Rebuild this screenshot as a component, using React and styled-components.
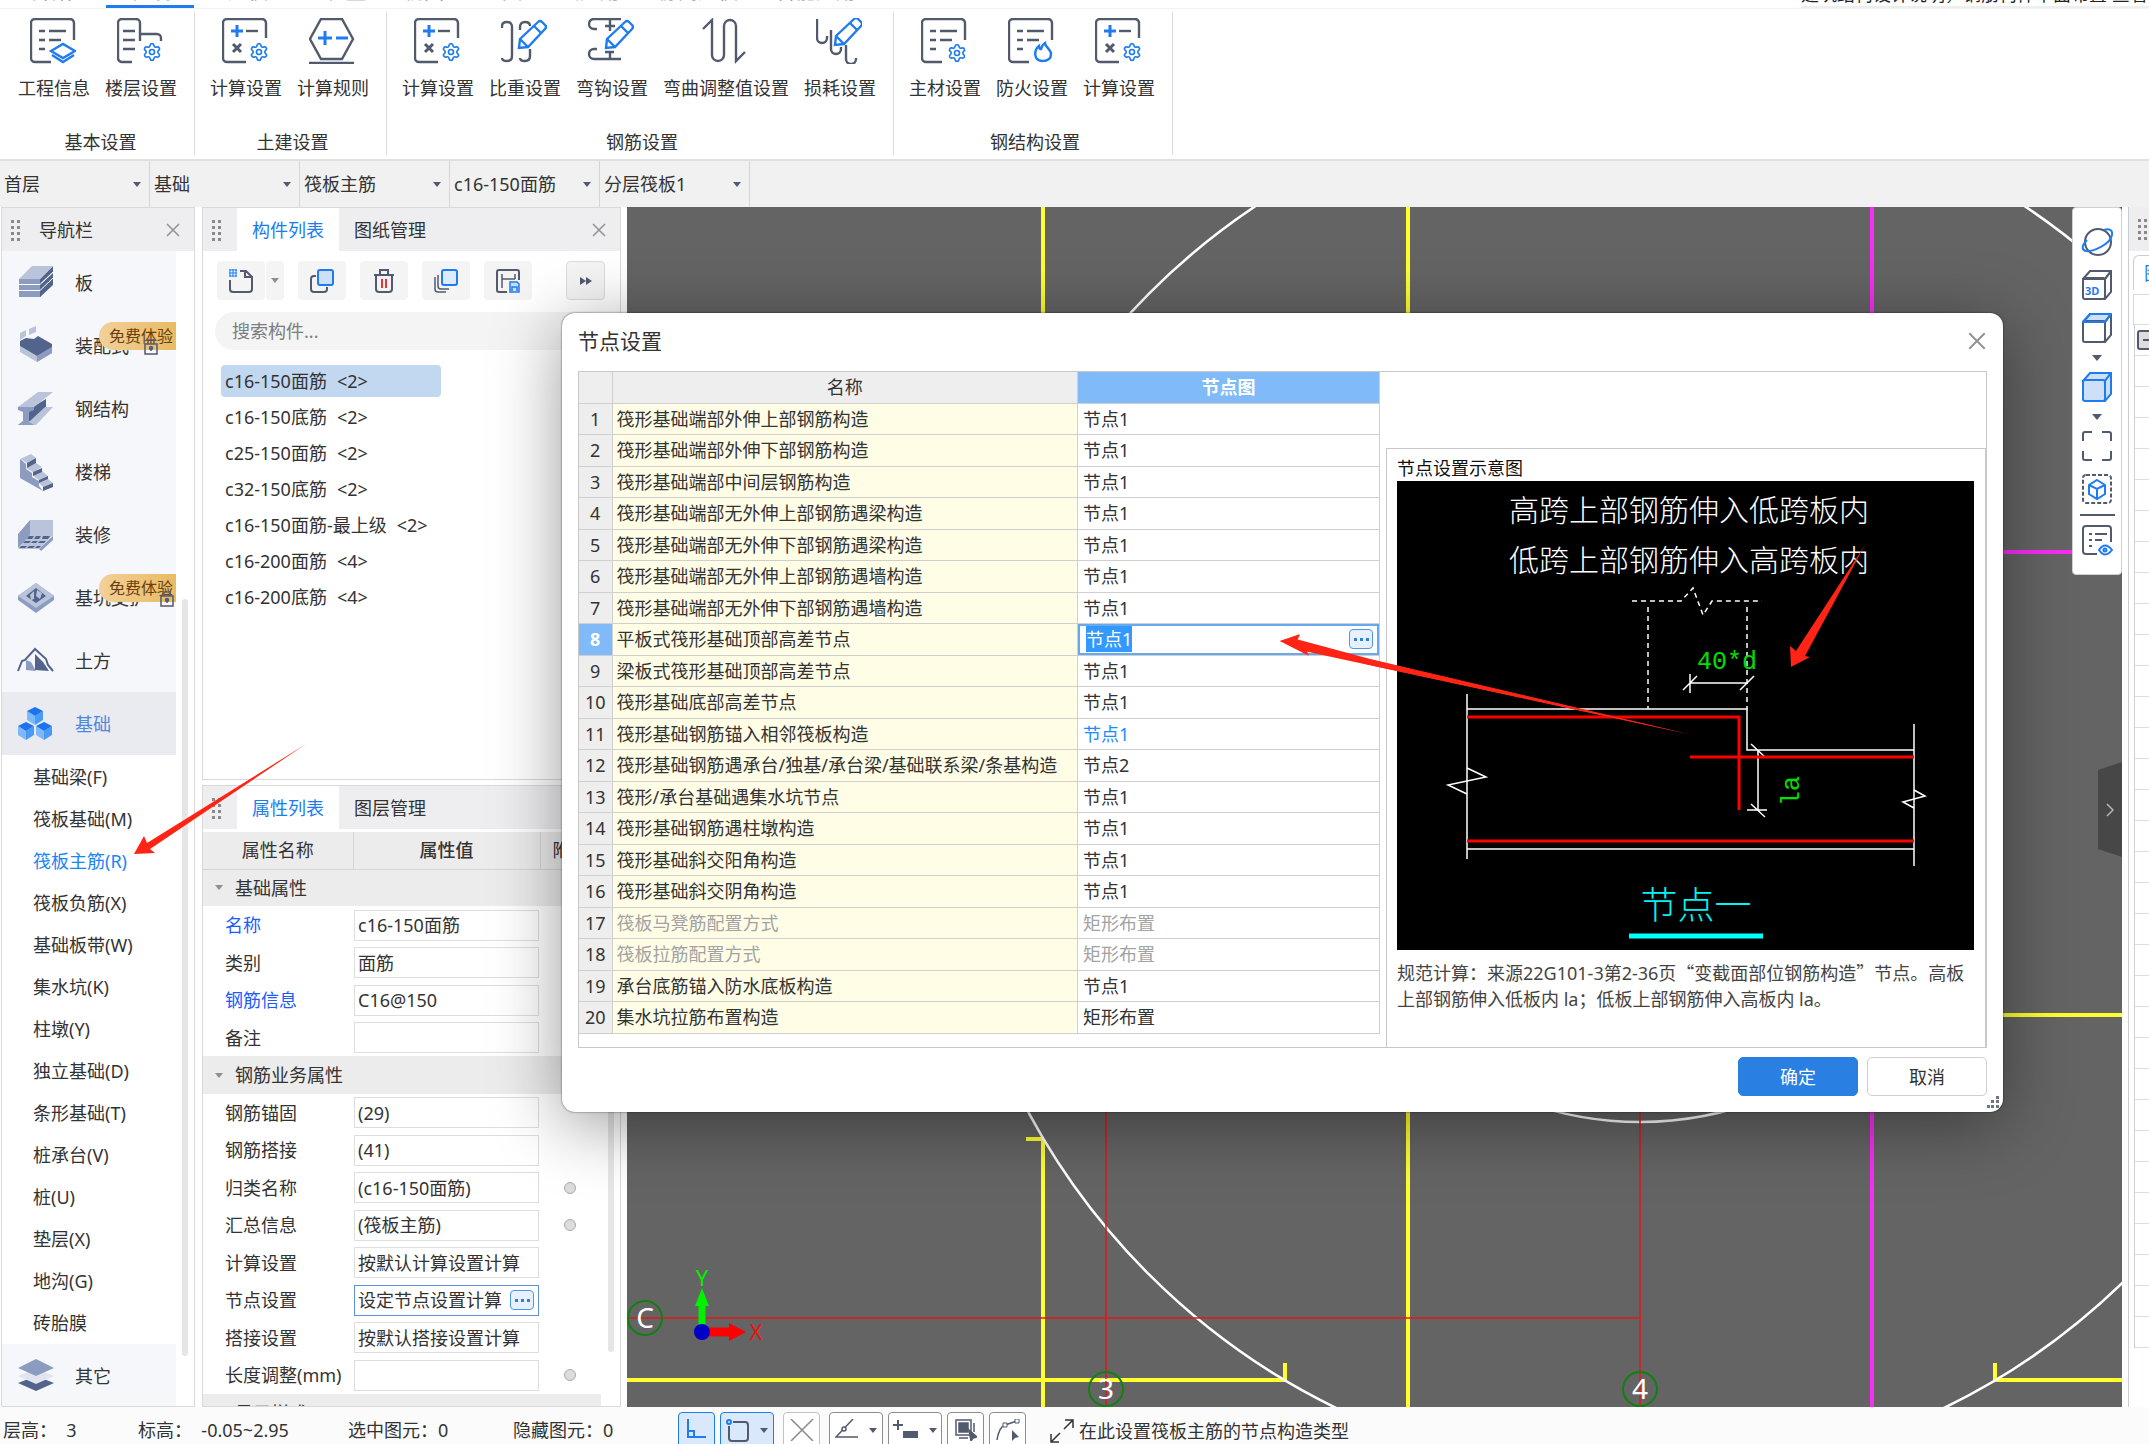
import React, { useEffect, useRef } from 'react';
import styled, { createGlobalStyle, css } from 'styled-components';
import { Settings } from 'lucide-react';

const GREY = '#525a6e';
const BLUE = '#1f7cf0';

const ribbonGroups = [
  {
    title: '基本设置',
    items: [
      { icon: 'info', label: '工程信息' },
      { icon: 'floor', label: '楼层设置' },
    ],
  },
  {
    title: '土建设置',
    items: [
      { icon: 'calc', label: '计算设置' },
      { icon: 'rule', label: '计算规则' },
    ],
  },
  {
    title: '钢筋设置',
    items: [
      { icon: 'calc', label: '计算设置' },
      { icon: 'weight', label: '比重设置' },
      { icon: 'hook', label: '弯钩设置' },
      { icon: 'bend', label: '弯曲调整值设置' },
      { icon: 'loss', label: '损耗设置' },
    ],
  },
  {
    title: '钢结构设置',
    items: [
      { icon: 'material', label: '主材设置' },
      { icon: 'fire', label: '防火设置' },
      { icon: 'calc', label: '计算设置' },
    ],
  },
];

const menuTabs = ['开始', '工程设置', '建模', '工程量', '视图', '工具', '云应用', '协同建模', '智能应用'];

const selectors = [
  ['楼层', '首层'],
  ['构件大类', '基础'],
  ['构件类型', '筏板主筋'],
  ['构件', 'c16-150面筋'],
  ['分层', '分层筏板1'],
];

const navItems = [
  { icon: 'slab', label: '板' },
  { icon: 'prefab', label: '装配式', trial: true, lock: 145 },
  { icon: 'steel', label: '钢结构' },
  { icon: 'stair', label: '楼梯' },
  { icon: 'decor', label: '装修' },
  { icon: 'pit', label: '基坑支护', trial: true, lock: 161 },
  { icon: 'earth', label: '土方' },
  { icon: 'base', label: '基础', active: true },
];

const subItems = [
  '基础梁(F)',
  '筏板基础(M)',
  '筏板主筋(R)',
  '筏板负筋(X)',
  '基础板带(W)',
  '集水坑(K)',
  '柱墩(Y)',
  '独立基础(D)',
  '条形基础(T)',
  '桩承台(V)',
  '桩(U)',
  '垫层(X)',
  '地沟(G)',
  '砖胎膜',
];

const components = [
  ['c16-150面筋', 2],
  ['c16-150底筋', 2],
  ['c25-150面筋', 2],
  ['c32-150底筋', 2],
  ['c16-150面筋-最上级', 2],
  ['c16-200面筋', 4],
  ['c16-200底筋', 4],
];

const properties = [
  { group: '基础属性' },
  { name: '名称', value: 'c16-150面筋', link: true },
  { name: '类别', value: '面筋' },
  { name: '钢筋信息', value: 'C16@150', link: true },
  { name: '备注', value: '' },
  { group: '钢筋业务属性' },
  { name: '钢筋锚固', value: '(29)' },
  { name: '钢筋搭接', value: '(41)' },
  { name: '归类名称', value: '(c16-150面筋)', dot: true },
  { name: '汇总信息', value: '(筏板主筋)', dot: true },
  { name: '计算设置', value: '按默认计算设置计算' },
  { name: '节点设置', value: '设定节点设置计算', active: true },
  { name: '搭接设置', value: '按默认搭接设置计算' },
  { name: '长度调整(mm)', value: '', dot: true },
  { group: '显示样式' },
];

const nodeRows = [
  ['筏形基础端部外伸上部钢筋构造', '节点1'],
  ['筏形基础端部外伸下部钢筋构造', '节点1'],
  ['筏形基础端部中间层钢筋构造', '节点1'],
  ['筏形基础端部无外伸上部钢筋遇梁构造', '节点1'],
  ['筏形基础端部无外伸下部钢筋遇梁构造', '节点1'],
  ['筏形基础端部无外伸上部钢筋遇墙构造', '节点1'],
  ['筏形基础端部无外伸下部钢筋遇墙构造', '节点1'],
  ['平板式筏形基础顶部高差节点', '节点1', 'editing'],
  ['梁板式筏形基础顶部高差节点', '节点1'],
  ['筏形基础底部高差节点', '节点1'],
  ['筏形基础钢筋锚入相邻筏板构造', '节点1', 'changed'],
  ['筏形基础钢筋遇承台/独基/承台梁/基础联系梁/条基构造', '节点2'],
  ['筏形/承台基础遇集水坑节点', '节点1'],
  ['筏形基础钢筋遇柱墩构造', '节点1'],
  ['筏形基础斜交阳角构造', '节点1'],
  ['筏形基础斜交阴角构造', '节点1'],
  ['筏板马凳筋配置方式', '矩形布置', 'disabled'],
  ['筏板拉筋配置方式', '矩形布置', 'disabled'],
  ['承台底筋锚入防水底板构造', '节点1'],
  ['集水坑拉筋布置构造', '矩形布置'],
];

/* ---------- icons ---------- */

const Gear = ({ x, y }) => (
  <Settings x={x - 10} y={y - 10} size={20} color={BLUE} strokeWidth={2} />
);

const Pencil = ({ dx = 0, dy = 0 }) => (
  <g transform={`translate(${dx} ${dy})`} stroke={BLUE}>
    <path d="M18 30l1-9L37 4q2-2 4 0l3 3q2 2 0 4L27 29z" fill="#fff" />
    <path d="M19 21l8 8M33 8l7 7" />
  </g>
);

const Doc = () => (
  <>
    <path d="M44 22V5a4 4 0 0 0-4-4H5a4 4 0 0 0-4 4v35a4 4 0 0 0 4 4h16" />
    <path d="M9 13h6M19 13h17M9 22h6M19 22h12M9 31h6" />
  </>
);

const ribbonIcons = {
  info: (
    <>
      <Doc />
      <g stroke={BLUE}>
        <path d="M21 33l12-7 12 7-12 7z" />
        <path d="M22 37l11 7 11-7" />
      </g>
    </>
  ),
  floor: (
    <>
      <path d="M15 44H5a4 4 0 0 1-4-4V5a4 4 0 0 1 4-4h14a4 4 0 0 1 4 4v18M23 16h17a4 4 0 0 1 4 4v3" />
      <path d="M6 13h12M6 22h12M6 31h12" />
      <Gear x={35} y={34} />
    </>
  ),
  calc: (
    <>
      <path d="M44 20V5a4 4 0 0 0-4-4H5a4 4 0 0 0-4 4v35a4 4 0 0 0 4 4h19" />
      <path d="M9 13h12M15 7v12" stroke={BLUE} strokeWidth="3" />
      <path d="M24 13h12" />
      <path d="M11 26l8 8M19 26l-8 8" strokeWidth="3" />
      <Gear x={37} y={34} />
    </>
  ),
  rule: (
    <>
      <path d="M12 1h21l11 20-11 20H12L1 21zM0 45h45" />
      <path d="M9 20h14M16 13v14M27 20h12" stroke={BLUE} strokeWidth="3" />
    </>
  ),
  weight: (
    <>
      <path d="M1 10V8q0-4 5-4t5 5v29q0 5-5 5t-5-3M19 12V9q0-5 5-5t5 4M29 31v7q0 5-5 5t-5-3" />
      <Pencil />
    </>
  ),
  hook: (
    <>
      <path d="M33 1H6a5 5 0 0 0 0 10h3M22 1v12M17 8h10M9 31H6a5 5 0 0 0 0 10h27M22 34v7M17 34h9" />
      <Pencil />
    </>
  ),
  bend: <path d="M1 11l9-9v35a6 6 0 0 0 12 0V8a6 6 0 0 1 12 0v35l9-9" />,
  loss: (
    <>
      <path d="M1 1v19a5 5 0 0 0 10 0v-2M15 12v19a5 5 0 0 0 10 0v-2M30 27v14a5 5 0 0 0 10 0v-1" />
      <Pencil dx={1} dy={-3} />
    </>
  ),
  material: (
    <>
      <Doc />
      <Gear x={36} y={35} />
    </>
  ),
  fire: (
    <>
      <Doc />
      <path d="M34 43c-9-1-8-11-3-15 0 2 1 3 2 3 1-3 2-5 4-6 0 4 6 6 6 11s-4 7-9 7z" stroke={BLUE} />
    </>
  ),
};

const LIGHT = '#b9c3da';
const MID = '#8c9bc0';
const DARK = '#52638c';

const navIcons = {
  slab: (
    <>
      <path d="M1 31l13-14h21L22 31z" fill={DARK} />
      <path d="M1 25h21v6H1zM1 19h21v5H1zM1 13h21v5H1z" fill={MID} />
      <path d="M22 13L35 0v6L22 18zM22 19L35 7v6L22 24zM22 25l13-12v6L22 31z" fill={DARK} />
      <path d="M1 13L14 0h21L22 13z" fill={LIGHT} />
      <path d="M1 18.500h21L35 6M1 24.500h21L35 12" stroke="#fff" fill="none" />
    </>
  ),
  prefab: (
    <>
      <path d="M2 17l17 10 15-9v6l-15 9L2 23z" fill={LIGHT} />
      <path d="M19 27l15-9v6l-15 9z" fill={MID} />
      <path d="M2 17v-5l6-3 8 1 4-3 14 8v3l-15 9z" fill={DARK} />
      <path d="M2 4l6-3v6l-6 4zM11 0l7-3v6l-7 3z" fill={LIGHT} />
    </>
  ),
  steel: (
    <>
      <path d="M8 19l20-12v9L14 28l-6 4z" fill={DARK} />
      <path d="M0 15L20 0h15L16 15zM0 33l5-4h7L27 15h8L18 33z" fill={LIGHT} />
      <path d="M0 15h16v3l-5 2v10l5 3H0l5-4V20l-5-2z" fill={MID} />
    </>
  ),
  stair: (
    <>
      <path d="M2 4l6 5v5l6 4v4l7 4v5l4 5L2 23z" fill={MID} />
      <path d="M2 4l11-5 5 4-9 5zM8 13l10-5 6 4-9 5zM14 20l10-4 6 5-9 4zM21 28l9-4 5 4-10 4z" fill={LIGHT} />
      <path d="M9 8l9-5v5l-9 5zM15 17l9-4v4l-9 4zM21 25l9-4v3l-9 4zM25 32l10-4v4l-10 4z" fill={DARK} />
    </>
  ),
  decor: (
    <>
      <path d="M0 16L12 2v16L0 30z" fill={MID} />
      <path d="M12 2h23v16H12z" fill={LIGHT} />
      <path d="M0 31l12-14h23L21 31z" fill={LIGHT} />
      <path d="M21 31l14-13v4L23 33z" fill={MID} />
      <path d="M11 18h5l-2 3H9zM18 18h5l-2 3h-5zM25 18h7l-2 3h-6zM7 23h6l-2 2H5zM15 23h5l-2 2h-5zM22 23h6l-2 2h-6zM3 28h6l-2 2H1zM11 28h6l-2 2H9zM19 28h4l-2 2h-4z" fill={DARK} />
    </>
  ),
  pit: (
    <>
      <path d="M0 15L18 2l18 13v4L18 32 0 19z" fill={MID} />
      <path d="M0 15L18 2l18 13-18 12z" fill={LIGHT} />
      <path d="M8 15l10-8 10 8-10 7z" fill={DARK} />
      <path d="M12 14l4-4v8l-3 1zM19 9l5 3-2 6-4-3z" fill={LIGHT} />
    </>
  ),
  earth: (
    <>
      <path d="M0 27l4-10 3-1L17 5l11 10 2 6 5 6" fill="none" stroke={DARK} strokeWidth="2" />
      <path d="M8 26V16l5 2 5 9z" fill={MID} />
      <path d="M17 26V10l8 8 6 9z" fill={DARK} />
    </>
  ),
  base: (
    <>
      {[
        [9, 0],
        [0, 15],
        [18, 15],
      ].map(([x, y]) => (
        <g key={`${x}-${y}`} transform={`translate(${x} ${y})`}>
          <path d="M0 4l8 5v9l-8-5z" fill="#7db8fb" />
          <path d="M16 4l-8 5v9l8-5z" fill="#4a9bf8" />
          <path d="M0 4l8-4 8 4-8 5z" fill="#1c73ee" />
        </g>
      ))}
    </>
  ),
  other: (
    <>
      <path d="M0 24l18-7 18 7-18 8z" fill={DARK} />
      <path d="M0 17l18-7 18 7-18 8z" fill="#e0e5f0" />
      <path d="M0 9l18-9 18 9-18 8z" fill={MID} />
    </>
  ),
};

const GripDots = ({ rows = 4 }) => (
  <svg width="12" height="24" viewBox="0 0 12 24" fill="#8a8a8a" aria-hidden="true">
    {Array.from({ length: rows }, (_, i) => (
      <g key={i}>
        <rect x="1" y={2 + i * 6} width="3" height="3" />
        <rect x="7" y={2 + i * 6} width="3" height="3" />
      </g>
    ))}
  </svg>
);

const Cross = ({ size = 14 }) => (
  <svg width={size} height={size} viewBox="0 0 14 14" stroke="#929292" strokeWidth="1.500" aria-hidden="true">
    <path d="M1 1l12 12M13 1L1 13" />
  </svg>
);

const Cube = ({ blueTop, filled, children }) => (
  <g fill="none" stroke={filled ? BLUE : GREY} strokeWidth="2">
    <path d="M1 9l7-8h21l-6 8z" fill={filled || blueTop ? '#cde0f8' : 'none'} stroke={filled || blueTop ? BLUE : GREY} />
    <path d="M23 9l6-8v21l-6 7z" fill={filled ? '#cde0f8' : 'none'} />
    <rect x="1" y="8" width="22" height="21" rx="2" fill={filled ? '#cde0f8' : 'none'} />
    {blueTop && <path d="M1 9l7-8h21l-6 8z" stroke={BLUE} />}
    {children}
  </g>
);

/* ---------- page ---------- */

function Ribbon() {
  return (
    <RibbonBar>
      {ribbonGroups.map((group) => (
        <RibbonGroup key={group.title}>
          <RibbonItems>
            {group.items.map((item) => (
              <RibbonButton key={item.label} type="button">
                <svg width="46" height="46" viewBox="0 0 46 46" fill="none" stroke={GREY} strokeWidth="2.400">
                  {ribbonIcons[item.icon]}
                </svg>
                {item.label}
              </RibbonButton>
            ))}
          </RibbonItems>
          <RibbonTitle>{group.title}</RibbonTitle>
        </RibbonGroup>
      ))}
    </RibbonBar>
  );
}

function NavPanel() {
  return (
    <Nav>
      <PanelHeader>
        <Grip>
          <GripDots />
        </Grip>
        <NavTitle>导航栏</NavTitle>
        <CloseButton type="button" aria-label="关闭导航栏">
          <Cross />
        </CloseButton>
      </PanelHeader>
      <NavBody>
        {navItems.map((item) => (
          <NavItem key={item.label} href="#" $active={item.active}>
            <svg width="36" height="36" viewBox="0 0 36 34" aria-hidden="true" overflow="visible">
              {navIcons[item.icon]}
            </svg>
            {item.label}
            {item.trial && <TrialBadge>免费体验</TrialBadge>}
            {item.lock && (
              <LockIcon $left={item.lock} viewBox="0 0 14 17" fill="none" stroke={GREY} strokeWidth="1.500">
                <path d="M1 6h12v10H1zM4 6V2h6v4M7 9v4" />
                <circle cx="7" cy="10" r="1.500" />
              </LockIcon>
            )}
          </NavItem>
        ))}
        <SubList>
          {subItems.map((label) => (
            <li key={label}>
              <SubItem href="#" $active={label === '筏板主筋(R)'}>
                {label}
              </SubItem>
            </li>
          ))}
        </SubList>
        <NavItem href="#">
          <svg width="36" height="36" viewBox="0 0 36 34" aria-hidden="true">
            {navIcons.other}
          </svg>
          其它
        </NavItem>
      </NavBody>
      <NavScroll />
    </Nav>
  );
}

function ComponentPanel() {
  return (
    <Panel>
      <PanelHeader>
        <Grip>
          <GripDots />
        </Grip>
        <PanelTab type="button" $active>
          构件列表
        </PanelTab>
        <PanelTab type="button">图纸管理</PanelTab>
        <CloseButton type="button" aria-label="关闭构件列表">
          <Cross />
        </CloseButton>
      </PanelHeader>
      <ToolRow>
        <SplitButton>
          <ToolButton type="button" aria-label="新建">
            <svg width="24" height="24" viewBox="0 0 24 24" fill="none" stroke={GREY} strokeWidth="2">
              <path d="M11 2h6l6 6v12a3 3 0 0 1-3 3H4a3 3 0 0 1-3-3V11M16 2v6h6" />
              <path d="M0 1h8M0 4h8M0 7h8M1 0v8M4 0v8M7 0v8" stroke={BLUE} strokeWidth="1" />
            </svg>
          </ToolButton>
          <SplitArrow type="button" aria-label="新建选项">
            <Caret $size={4} />
          </SplitArrow>
        </SplitButton>
        <ToolButton type="button" aria-label="复制">
          <svg width="24" height="24" viewBox="0 0 24 24" fill="none" stroke={GREY} strokeWidth="2">
            <path d="M6 7H4a3 3 0 0 0-3 3v10a3 3 0 0 0 3 3h10a3 3 0 0 0 3-3v-2" />
            <rect x="8" y="1" width="15" height="15" rx="2" fill="#cde0f8" stroke={BLUE} />
          </svg>
        </ToolButton>
        <ToolButton type="button" aria-label="删除">
          <svg width="22" height="24" viewBox="0 0 22 24" fill="none" stroke={GREY} strokeWidth="2">
            <path d="M1 6h20M7 5V1h8v4M3 6v14a3 3 0 0 0 3 3h10a3 3 0 0 0 3-3V6" />
            <path d="M9 10v9M13 10v9" stroke="#e8343a" />
          </svg>
        </ToolButton>
        <ToolButton type="button" aria-label="层间复制">
          <svg width="24" height="24" viewBox="0 0 24 24" fill="none" stroke={GREY} strokeWidth="2">
            <path d="M1 8v12a3 3 0 0 0 3 3h8M4 6v11a3 3 0 0 0 3 3h8" strokeWidth="1.500" />
            <rect x="8" y="1" width="15" height="15" rx="2" fill="#deebfb" stroke={BLUE} />
          </svg>
        </ToolButton>
        <ToolButton type="button" aria-label="存档">
          <svg width="24" height="24" viewBox="0 0 24 24" fill="none" stroke={GREY} strokeWidth="2">
            <path d="M23 11V3a2 2 0 0 0-2-2H3a2 2 0 0 0-2 2v18a2 2 0 0 0 2 2h8" />
            <path d="M6 5v14M19 5v5M6 10h13" strokeWidth="1.500" />
            <path d="M14 13h7l2 2v8h-9zM16 22v-4h5v4" stroke={BLUE} strokeWidth="1.500" fill="#cde0f8" />
          </svg>
        </ToolButton>
        <MoreButton type="button" aria-label="更多">
          <svg width="12" height="8" viewBox="0 0 12 8" fill={GREY}>
            <path d="M0 0l6 4-6 4zM6 0l6 4-6 4z" />
          </svg>
        </MoreButton>
      </ToolRow>
      <SearchInput type="search" aria-label="搜索构件" placeholder="搜索构件..." />
      <ComponentList>
        {components.map(([name, count], index) => (
          <ComponentItem key={name} $active={index === 0}>
            <span>{name}</span>
            <span>{`< ${count} >`.replace(/ /g, '')}</span>
          </ComponentItem>
        ))}
      </ComponentList>
    </Panel>
  );
}

function PropertyPanel() {
  return (
    <Panel>
      <PanelHeader>
        <Grip>
          <GripDots />
        </Grip>
        <PanelTab type="button" $active>
          属性列表
        </PanelTab>
        <PanelTab type="button">图层管理</PanelTab>
      </PanelHeader>
      <PropertyTable>
        <colgroup>
          <col className="name" />
          <col className="value" />
          <col />
        </colgroup>
        <thead>
          <tr>
            <th>属性名称</th>
            <th className="strong">属性值</th>
            <th className="extra">附加</th>
          </tr>
        </thead>
        <tbody>
          {properties.map((row) =>
            row.group ? (
              <tr key={row.group}>
                <td colSpan={3} className="group">
                  <GroupLabel>
                    <Caret $size={4} />
                    {row.group}
                  </GroupLabel>
                </td>
              </tr>
            ) : (
              <tr key={row.name}>
                <PropertyName $link={row.link}>
                  <label htmlFor={`prop-${row.name}`}>{row.name}</label>
                </PropertyName>
                <td>
                  <ValueBox $active={row.active}>
                    <input id={`prop-${row.name}`} defaultValue={row.value} />
                    {row.active && (
                      <DotsButton type="button" aria-label="打开节点设置">
                        <i />
                        <i />
                        <i />
                      </DotsButton>
                    )}
                  </ValueBox>
                </td>
                <td className="dot">
                  {row.dot && <ExtraCheck type="checkbox" aria-label={`附加${row.name}`} />}
                </td>
              </tr>
            )
          )}
        </tbody>
      </PropertyTable>
      <PropertyScroll />
    </Panel>
  );
}

function ModelView() {
  return (
    <Canvas>
      <svg width="100%" height="100%" viewBox="627 207 1495 1200" preserveAspectRatio="xMinYMin slice" fill="none">
        <g stroke="#ffff2e" strokeWidth="4">
          <path d="M1043 207v150M1026 1139h18M1043 1139v268M1408 207v1200" />
          <path d="M627 1380h660M1285 1363v17M1995 1363v17M1994 1380h130M1980 1015h144" />
        </g>
        <path d="M1872 207v1200M1980 552h144" stroke="#fb2cf8" strokeWidth="4" />
        <g stroke="#fff" strokeWidth="2.500">
          <circle cx="1640" cy="784" r="694" />
          <circle cx="1640" cy="784" r="338" />
        </g>
        <path d="M627 1318h1013M1106 1100v307M1640 1100v307" stroke="#e01818" strokeWidth="1.500" />
        <g stroke="#118011" strokeWidth="2">
          <circle cx="645" cy="1318" r="17" />
          <circle cx="1106" cy="1389" r="17" />
          <circle cx="1640" cy="1389" r="17" />
        </g>
        <g fill="#fff" fontSize="28" textAnchor="middle">
          <text x="645" y="1328">C</text>
          <text x="1106" y="1399">3</text>
          <text x="1640" y="1399">4</text>
        </g>
        <path d="M702 1332v-30" stroke="#00f000" strokeWidth="7" />
        <path d="M702 1288l7 18h-14z" fill="#00f000" />
        <path d="M702 1332h28" stroke="#f00" strokeWidth="9" />
        <path d="M729 1323l17 9-17 9z" fill="#f00" />
        <circle cx="702" cy="1332" r="8" fill="#0000c8" />
        <g fontSize="22" textAnchor="middle">
          <text x="702" y="1286" fill="#00f000">
            Y
          </text>
          <text x="756" y="1340" fill="#f01010">
            X
          </text>
        </g>
      </svg>
      <ViewTools>
        <ViewButton type="button" aria-label="动态观察">
          <svg width="32" height="30" viewBox="0 0 32 30" fill="none" stroke={GREY} strokeWidth="2">
            <circle cx="17" cy="15" r="13" />
            <path d="M6 13c-5 5-6 10-1 11 6 1 24-6 26-16 1-5-3-7-8-5" stroke={BLUE} />
          </svg>
        </ViewButton>
        <ViewButton type="button" aria-label="三维">
          <svg width="30" height="30" viewBox="0 0 30 30">
            <Cube />
            <text x="3" y="25" fontSize="11" fontWeight="700" fill={BLUE}>
              3D
            </text>
          </svg>
        </ViewButton>
        <ViewButton type="button" aria-label="俯视">
          <svg width="30" height="30" viewBox="0 0 30 30">
            <Cube blueTop />
          </svg>
        </ViewButton>
        <Caret $size={5} $dark />
        <ViewButton type="button" aria-label="实体显示">
          <svg width="30" height="30" viewBox="0 0 30 30">
            <Cube filled />
          </svg>
        </ViewButton>
        <Caret $size={5} $dark />
        <ViewButton type="button" aria-label="全屏">
          <svg width="30" height="30" viewBox="0 0 30 30" fill="none" stroke={GREY} strokeWidth="2">
            <path d="M1 10V3q0-2 2-2h7M20 1h7q2 0 2 2v7M29 20v7q0 2-2 2h-7M10 29H3q-2 0-2-2v-7" />
          </svg>
        </ViewButton>
        <ViewButton type="button" aria-label="局部三维">
          <svg width="30" height="30" viewBox="0 0 30 30" fill="none" strokeWidth="2">
            <rect x="1" y="1" width="28" height="28" rx="3" stroke={GREY} strokeDasharray="4 2" />
            <path d="M15 6l8 5v9l-8 5-8-5v-9zM7 11l8 4 8-4M15 15v10" stroke={BLUE} />
          </svg>
        </ViewButton>
        <ToolDivider />
        <ViewButton type="button" aria-label="显示设置">
          <svg width="31" height="31" viewBox="0 0 31 31" fill="none" stroke={GREY} strokeWidth="2">
            <path d="M29 17V4q0-3-3-3H4Q1 1 1 4v22q0 3 3 3h11M7 9h3M13 9h12M7 15h3M13 15h7M7 21h3" />
            <path d="M17 25q6-9 13 0-7 9-13 0z" stroke={BLUE} />
            <circle cx="23" cy="25" r="1.500" stroke={BLUE} />
          </svg>
        </ViewButton>
      </ViewTools>
      <SideHandle type="button" aria-label="展开">
        <svg width="8" height="14" viewBox="0 0 8 14" fill="none" stroke="#b5b5b5" strokeWidth="1.500">
          <path d="M1 1l6 6-6 6" />
        </svg>
      </SideHandle>
    </Canvas>
  );
}

function DrawingPanel() {
  return (
    <EdgePanel>
      <EdgeHeader>
        <GripDots />
      </EdgeHeader>
      <EdgeTab>图纸管理</EdgeTab>
      <EdgeBlank />
      <EdgeGrid>
        <EdgeRow>
          <Minus />
        </EdgeRow>
        {Array.from({ length: 32 }, (_, i) => (
          <EdgeRow key={i} />
        ))}
      </EdgeGrid>
    </EdgePanel>
  );
}

function NodeDiagram() {
  return (
    <Diagram viewBox="0 0 577 469" fill="none" stroke="#fff" strokeWidth="1.500">
      <g stroke="none" fill="#fff" fontSize="30" fontWeight="300" textAnchor="middle">
        <text x="292" y="40">
          高跨上部钢筋伸入低跨板内
        </text>
        <text x="292" y="90">
          低跨上部钢筋伸入高跨板内
        </text>
      </g>
      <g strokeDasharray="5 4">
        <path d="M235 120h49l12-13 10 27 9-14h50M251 126v102M350 126v102" />
      </g>
      <path d="M293 202h57M293 193v19M286 209l14-14M343 209l14-14" />
      <path d="M70 213v165M70 228h280v41h167M517 243v142M70 368h447" />
      <path d="M70 287l19 9-38 8 19 9M517 309l11 6-22 6 11 6" />
      <path d="M361 269v60M350 329h20M354 263l14 13M354 323l14 13" />
      <g stroke="#f00" strokeWidth="3">
        <path d="M70 236h272v93M293 276h224M70 360h447" />
      </g>
      <g stroke="none" fill="#00e000" fontSize="25" fontFamily="Liberation Mono, monospace">
        <text x="300" y="188">
          40*d
        </text>
        <text transform="translate(402 325) rotate(-90)">la</text>
      </g>
      <text x="299" y="438" stroke="none" fill="#00f5f5" fontSize="37" fontWeight="300" textAnchor="middle">
        节点一
      </text>
      <path d="M232 455h134" stroke="#0ff" strokeWidth="5" />
    </Diagram>
  );
}

function NodeDialog() {
  const editor = useRef(null);

  useEffect(() => {
    editor.current.focus();
    editor.current.select();
  }, []);

  return (
    <Dialog role="dialog" aria-label="节点设置">
      <DialogHeader>
        <h2>节点设置</h2>
        <DialogClose type="button" aria-label="关闭">
          <Cross size={18} />
        </DialogClose>
      </DialogHeader>
      <DialogBody>
        <NodeTable>
          <colgroup>
            <col className="index" />
            <col />
            <col className="node" />
          </colgroup>
          <thead>
            <tr>
              <th aria-label="序号" />
              <th>名称</th>
              <th className="current">节点图</th>
            </tr>
          </thead>
          <tbody>
            {nodeRows.map(([name, node, state], index) => (
              <tr key={name} className={state}>
                <th scope="row">{index + 1}</th>
                <td className="name">{name}</td>
                <td className="value">
                  {state === 'editing' ? (
                    <NodeEditor>
                      <input ref={editor} aria-label={name} defaultValue={node} />
                      <DotsButton type="button" aria-label="选择节点图">
                        <i />
                        <i />
                        <i />
                      </DotsButton>
                    </NodeEditor>
                  ) : (
                    node
                  )}
                </td>
              </tr>
            ))}
          </tbody>
        </NodeTable>
        <Preview>
          <h3>节点设置示意图</h3>
          <NodeDiagram />
          <p>
            规范计算：来源22G101-3第2-36页<Quote>“</Quote>变截面部位钢筋构造<Quote>”</Quote>节点。高板上部钢筋伸入低板内
            la；低板上部钢筋伸入高板内 la。
          </p>
        </Preview>
      </DialogBody>
      <DialogFooter>
        <DialogButton type="button" $primary>
          确定
        </DialogButton>
        <DialogButton type="button">取消</DialogButton>
      </DialogFooter>
      <ResizeGrip viewBox="0 0 12 12" fill="#6d7482">
        <path d="M9 0h3v3H9zM9 4h3v3H9zM9 9h3v3H9zM4 4h3v3H4zM4 9h3v3H4zM0 9h3v3H0z" />
      </ResizeGrip>
    </Dialog>
  );
}

function StatusBar() {
  return (
    <Status>
      <StatusText $width={135}>层高：&nbsp; 3</StatusText>
      <StatusText $width={210}>标高：&nbsp; -0.05~2.95</StatusText>
      <StatusText $width={165}>选中图元：0</StatusText>
      <StatusText $width={165}>隐藏图元：0</StatusText>
      <StatusTools>
        <StatusButton type="button" aria-label="正交" $on>
          <svg width="20" height="20" viewBox="0 0 20 20" fill="none" stroke={BLUE} strokeWidth="2">
            <path d="M1 0v18h18M1 12h6v6" />
          </svg>
        </StatusButton>
        <StatusButton type="button" aria-label="对象捕捉" $on $wide>
          <svg width="24" height="24" viewBox="0 0 24 24" fill="none" stroke={GREY} strokeWidth="2">
            <path d="M7 3h12q3 0 3 3v13q0 3-3 3H6q-3 0-3-3V7" />
            <circle cx="3" cy="3" r="2" stroke={BLUE} />
          </svg>
          <Caret $size={4} $dark />
        </StatusButton>
        <StatusButton type="button" aria-label="交点" $faint>
          <svg width="24" height="22" viewBox="0 0 24 22" fill="none" stroke="#8b8b8b" strokeWidth="1.500">
            <path d="M1 0l22 22M23 0L1 22" />
          </svg>
        </StatusButton>
        <StatusButton type="button" aria-label="角度" $wide>
          <svg width="24" height="20" viewBox="0 0 24 20" fill="none" stroke={GREY} strokeWidth="1.500">
            <path d="M18 0L1 18h22" />
            <circle cx="9" cy="10" r="2" fill="#fff" />
          </svg>
          <Caret $size={4} $dark />
        </StatusButton>
        <StatusButton type="button" aria-label="偏移" $wide>
          <svg width="26" height="20" viewBox="0 0 26 20" fill="none" stroke={GREY} strokeWidth="2">
            <path d="M0 6h10M5 1v10" />
            <path d="M10 12h15v7H10z" fill={GREY} stroke="none" />
          </svg>
          <Caret $size={4} $dark />
        </StatusButton>
        <StatusButton type="button" aria-label="选择">
          <svg width="22" height="22" viewBox="0 0 22 22" fill="none" stroke={GREY} strokeWidth="1.500">
            <path d="M1 1h15v15H1zM19 4v9M4 19h9" />
            <path d="M4 4h9v9H4z" fill={GREY} />
            <path d="M14 11l8 7-4 1-2 3z" fill={GREY} />
          </svg>
        </StatusButton>
        <StatusButton type="button" aria-label="折线">
          <svg width="24" height="22" viewBox="0 0 24 22" fill="none" stroke={GREY} strokeWidth="1.500">
            <path d="M1 21Q3 8 9 6l12-4" />
            <path d="M7 4h4v4H7zM19 0h4v4h-4z" fill="#fff" strokeWidth="1" />
            <path d="M16 11l7 7-4 1-3 3z" fill={GREY} stroke="none" />
          </svg>
        </StatusButton>
      </StatusTools>
      <StatusHint>
        <svg width="24" height="24" viewBox="0 0 24 24" fill="none" stroke="#333" strokeWidth="1.500">
          <path d="M14 10l9-9M15 1h8v8M10 14l-9 9M1 15v8h8" />
        </svg>
        在此设置筏板主筋的节点构造类型
      </StatusHint>
    </Status>
  );
}

function App() {
  return (
    <Page>
      <GlobalStyle />
      <MenuRow>
        <MenuTabs>
          {menuTabs.map((tab) => (
            <MenuTab key={tab} href="#" $active={tab === '工程设置'}>
              {tab}
            </MenuTab>
          ))}
        </MenuTabs>
        <MenuNotice>建筑结构设计说明，钢筋构件平面布置 查看图纸</MenuNotice>
      </MenuRow>
      <Ribbon />
      <SelectorBar>
        {selectors.map(([label, value]) => (
          <SelectCell key={label}>
            <select aria-label={label} defaultValue={value}>
              <option>{value}</option>
            </select>
            <Caret $size={4} $dark />
          </SelectCell>
        ))}
      </SelectorBar>
      <Workspace>
        <NavPanel />
        <PanelColumn>
          <ComponentPanel />
          <PropertyPanel />
        </PanelColumn>
        <ModelView />
        <DrawingPanel />
      </Workspace>
      <StatusBar />
      <NodeDialog />
      <Annotations viewBox="0 0 2149 1444" preserveAspectRatio="xMinYMin meet" fill="#ff2415">
        <path d="M134 854l10-18 3 7L306 744 150 849l5 4z" />
        <path d="M1280 641l20-6-4 7 392 92-384-83 5 5z" />
        <path d="M1280 641l29 14-4-7 65 17 318 69-318-75-74-20 4-5z" />
        <path d="M1791 667l-1-21 6 5 69-106-60 111 5 1z" />
      </Annotations>
    </Page>
  );
}

/* ---------- styles ---------- */

const GlobalStyle = createGlobalStyle`
  * {
    box-sizing: border-box;
  }

  body {
    margin: 0;
    overflow: hidden;
    color: #333;
    font-family: 'Noto Sans', 'Noto Sans CJK SC', sans-serif;
    font-size: 18px;
    line-height: 26px;
  }

  button, input, select {
    margin: 0;
    padding: 0;
    border: 0;
    background: none;
    color: inherit;
    font: inherit;
  }

  a {
    color: inherit;
    text-decoration: none;
  }

  ul, h2, h3, p {
    margin: 0;
    padding: 0;
    list-style: none;
    font-size: 18px;
    font-weight: 400;
  }
`;

const Page = styled.div`
  position: relative;
  display: flex;
  flex-direction: column;
  height: 100vh;
  overflow: hidden;
  background: #fff;
`;

const Caret = styled.span`
  flex: none;
  width: 0;
  border: ${(props) => props.$size}px solid transparent;
  border-top: ${(props) => props.$size + 1}px solid ${(props) => (props.$dark ? GREY : '#8f8f8f')};
  border-bottom: 0;
`;

const MenuRow = styled.header`
  display: flex;
  flex: none;
  justify-content: space-between;
  align-items: flex-end;
  height: 9px;
  padding-left: 28px;
  border-bottom: 1px solid #f2f2f2;
`;

const MenuTabs = styled.nav`
  display: flex;
  gap: 30px;
`;

const MenuTab = styled.a`
  height: 26px;
  padding: 0 4px;
  border-bottom: 3px solid ${(props) => (props.$active ? BLUE : 'transparent')};
  color: ${(props) => (props.$active ? BLUE : '#777')};
  font-size: 20px;
  line-height: 20px;
`;

const MenuNotice = styled.span`
  width: 348px;
  height: 24px;
  overflow: hidden;
  border-bottom: 2px solid #eee;
  color: #222;
  line-height: 20px;
  white-space: nowrap;
`;

const RibbonBar = styled.section`
  display: flex;
  flex: none;
  height: 150px;
  padding: 3px 0 4px 3px;
`;

const RibbonGroup = styled.div`
  display: flex;
  flex-direction: column;
  justify-content: space-between;
  padding: 6px 10px 0 8px;
  border-right: 1px solid #dcdcdc;
`;

const RibbonItems = styled.div`
  display: flex;
  gap: 1px;
`;

const RibbonButton = styled.button`
  display: flex;
  flex-direction: column;
  align-items: center;
  gap: 11px;
  padding: 0 7px;

  svg {
    margin-right: 2px;
  }
`;

const RibbonTitle = styled.div`
  padding-left: 6px;
  text-align: center;
`;

const SelectorBar = styled.div`
  display: flex;
  flex: none;
  height: 48px;
  border-top: 2px solid #dfdfdf;
  background: #f1f1f1;
`;

const SelectCell = styled.div`
  display: flex;
  align-items: center;
  width: 150px;
  padding: 0 8px 0 4px;
  border-right: 1px solid #d6d6d6;

  select {
    flex: 1;
    min-width: 0;
    appearance: none;
  }
`;

const Workspace = styled.main`
  display: flex;
  flex: 1;
  min-height: 0;
`;

const PanelHeader = styled.div`
  display: flex;
  flex: none;
  align-items: stretch;
  height: 43px;
  background: #eeeef0;
`;

const Grip = styled.span`
  display: flex;
  flex: none;
  align-items: center;
  width: 34px;
  padding-left: 8px;
`;

const CloseButton = styled.button`
  display: flex;
  align-items: center;
  margin-left: auto;
  padding-right: 14px;
`;

const Nav = styled.aside`
  position: relative;
  display: flex;
  flex: none;
  flex-direction: column;
  width: 194px;
  margin-left: 1px;
  border: 1px solid #d9d9d9;
  overflow: hidden;
`;

const NavTitle = styled.span`
  align-self: center;
  padding-left: 3px;
`;

const NavBody = styled.div`
  flex: 1;
  width: 174px;
  overflow: hidden;
`;

const NavItem = styled.a`
  position: relative;
  display: flex;
  align-items: center;
  gap: 21px;
  height: 63px;
  padding-left: 16px;
  background: ${(props) => (props.$active ? '#e9ebf0' : '#f5f7fa')};
  color: ${(props) => (props.$active ? '#4f86e0' : '#333')};
  white-space: nowrap;
`;

const TrialBadge = styled.span`
  position: absolute;
  top: 8px;
  right: 0;
  width: 77px;
  padding-left: 10px;
  border-radius: 14px 0 0 14px;
  background: linear-gradient(90deg, #f3d09a, #e8bb62);
  color: #6b3f0c;
  font-size: 16px;
  line-height: 28px;
`;

const LockIcon = styled.svg`
  position: absolute;
  top: 24px;
  left: ${(props) => props.$left - 3}px;
  width: 14px;
  height: 17px;
`;

const SubList = styled.ul`
  padding-top: 1px;
`;

const SubItem = styled.a`
  display: block;
  padding-left: 31px;
  color: ${(props) => (props.$active ? '#1a86f5' : '#333')};
  line-height: 42px;
`;

const NavScroll = styled.div`
  position: absolute;
  right: 6px;
  top: 391px;
  bottom: 50px;
  width: 6px;
  border-radius: 3px;
  background: #e6e6e6;
`;

const PanelColumn = styled.div`
  display: grid;
  flex: none;
  grid-template-rows: 573px minmax(0, 1fr);
  gap: 5px;
  width: 419px;
  margin: 0 6px 0 7px;
`;

const Panel = styled.section`
  position: relative;
  display: flex;
  flex-direction: column;
  min-height: 0;
  border: 1px solid #d9d9d9;
  overflow: hidden;
`;

const PanelTab = styled.button`
  padding: 0 15px;
  background: ${(props) => (props.$active ? '#fff' : 'transparent')};
  color: ${(props) => (props.$active ? '#1a7cf0' : '#333')};
`;

const ToolRow = styled.div`
  display: flex;
  gap: 14px;
  padding: 10px 15px 12px 14px;
`;

const ToolButton = styled.button`
  display: flex;
  align-items: center;
  justify-content: center;
  width: 48px;
  height: 39px;
  border-radius: 4px;
  background: #f4f4f4;
`;

const SplitButton = styled.div`
  display: flex;
  gap: 1px;
`;

const SplitArrow = styled(ToolButton)`
  width: 18px;
`;

const MoreButton = styled(ToolButton)`
  width: 39px;
  margin-left: auto;
  border: 1px solid #dcdcdc;
`;

const SearchInput = styled.input`
  height: 38px;
  margin: 0 12px 15px;
  padding: 0 17px;
  border-radius: 19px;
  background: #f4f4f4;

  &::placeholder {
    color: #7d7d7d;
  }
`;

const ComponentList = styled.ul`
  display: flex;
  flex-direction: column;
  align-items: flex-start;
  gap: 4px;
  padding-left: 18px;
`;

const ComponentItem = styled.li`
  display: flex;
  gap: 10px;
  min-width: 220px;
  padding-left: 4px;
  border-radius: 4px;
  background: ${(props) => (props.$active ? '#c1d8f0' : 'transparent')};
  line-height: 32px;
`;

const PropertyTable = styled.table`
  width: 398px;
  margin-top: 3px;
  border-collapse: collapse;
  table-layout: fixed;

  .name {
    width: 150px;
  }

  .value {
    width: 187px;
  }

  th {
    height: 37px;
    padding: 0;
    border-right: 1px solid #d6d6d6;
    border-bottom: 1px solid #d6d6d6;
    background: #ececec;
    font-weight: 400;
  }

  th.strong {
    font-weight: 500;
  }

  th.extra {
    padding-left: 12px;
    text-align: left;
  }

  td {
    height: 37px;
    padding: 0;
  }

  tr:nth-child(even) td {
    height: 38px;
  }

  td.group {
    background: #ececec;
  }

  td.dot {
    padding-left: 24px;
    line-height: 0;
  }
`;

const GroupLabel = styled.div`
  display: flex;
  align-items: center;
  gap: 12px;
  padding-left: 12px;
`;

const PropertyName = styled.td`
  && {
    padding-left: 22px;
    color: ${(props) => (props.$link ? '#1b5cff' : '#333')};
  }
`;

const ValueBox = styled.div`
  display: flex;
  align-items: center;
  height: 31px;
  margin: 0 1px;
  padding: 0 4px 0 3px;
  border: 1px solid ${(props) => (props.$active ? '#5b8fe0' : '#dedede')};
  background: #fff;

  input {
    flex: 1;
    width: 100%;
    min-width: 0;
    outline: 0;
  }
`;

const DotsButton = styled.button`
  display: flex;
  flex: none;
  align-items: center;
  justify-content: center;
  gap: 3px;
  width: 24px;
  height: 20px;
  border: 1px solid #4b98e8;
  border-radius: 4px;
  background: #e6f1fd;

  i {
    width: 3px;
    height: 3px;
    background: #2c7fdf;
  }
`;

const ExtraCheck = styled.input`
  width: 12px;
  height: 12px;
  border: 1px solid #aaa;
  border-radius: 50%;
  background: #dcdcdc;
  appearance: none;
`;

const PropertyScroll = styled.div`
  position: absolute;
  top: 84px;
  right: 6px;
  bottom: 54px;
  width: 6px;
  border-radius: 3px;
  background: #e6e6e6;
`;

const Canvas = styled.section`
  position: relative;
  flex: 1;
  min-width: 0;
  overflow: hidden;
  background: #646464;

  > svg {
    display: block;
  }
`;

const ViewTools = styled.div`
  position: absolute;
  top: 0;
  right: 0;
  display: flex;
  flex-direction: column;
  align-items: center;
  width: 50px;
  padding: 19px 0;
  border: 1px solid #cfcfcf;
  border-radius: 4px;
  background: #fff;
`;

const ViewButton = styled.button`
  display: flex;
  align-items: center;
  justify-content: center;
  width: 32px;
  height: 30px;
  margin-bottom: 13px;

  & + span {
    margin: -1px 0 11px;
  }
`;

const ToolDivider = styled.hr`
  width: 35px;
  height: 2px;
  margin: -3px 0 9px;
  border: 0;
  background: ${GREY};

  & + button {
    margin-bottom: 0;
  }
`;

const SideHandle = styled.button`
  position: absolute;
  top: 555px;
  right: 0;
  display: flex;
  align-items: center;
  justify-content: center;
  width: 24px;
  height: 95px;
  background: #474747;
  clip-path: polygon(0 8px, 100% 0, 100% 100%, 0 87px);
`;

const EdgePanel = styled.aside`
  flex: none;
  width: 21px;
  margin-left: 6px;
  border-left: 1px solid #c9ccd4;
  overflow: hidden;
`;

const EdgeHeader = styled.div`
  display: flex;
  align-items: center;
  height: 44px;
  padding-left: 8px;
  background: #eeeef0;
`;

const EdgeTab = styled.div`
  height: 35px;
  margin: 4px 0 0 4px;
  padding-left: 10px;
  border: 1px solid #c9ccd4;
  border-right: 0;
  border-bottom: 0;
  border-radius: 6px 0 0 0;
  color: ${BLUE};
  line-height: 35px;
  white-space: nowrap;
`;

const EdgeBlank = styled.div`
  height: 31px;
  margin: 4px 0 0 4px;
  border: 1px solid #d9d9d9;
  border-right: 0;
`;

const EdgeGrid = styled.div`
  margin-left: 5px;
  border-left: 1px solid #cfcfcf;
`;

const EdgeRow = styled.div`
  display: flex;
  align-items: center;
  height: 31px;
  padding-left: 2px;
  border-bottom: 1px solid #dcdcdc;
`;

const Minus = styled.span`
  display: flex;
  flex: none;
  align-items: center;
  width: 20px;
  height: 20px;
  padding: 0 4px;
  border: 2px solid ${GREY};
  border-radius: 3px;
  background: #ddd;

  &::after {
    content: '';
    width: 100%;
    height: 2px;
    background: ${GREY};
  }
`;

const Status = styled.footer`
  display: flex;
  flex: none;
  align-items: flex-start;
  height: 37px;
  padding-left: 3px;
  overflow: hidden;
  background: #fbfbfb;
`;

const StatusText = styled.span`
  flex: none;
  width: ${(props) => props.$width}px;
  line-height: 46px;
  white-space: nowrap;
`;

const StatusTools = styled.div`
  display: flex;
  gap: 5px;
  padding-top: 5px;
`;

const StatusButton = styled.button`
  display: flex;
  align-items: flex-start;
  justify-content: center;
  gap: 10px;
  width: ${(props) => (props.$wide ? 54 : 37)}px;
  height: 38px;
  padding-top: 6px;
  border: 1px solid #8d8d8d;
  border-radius: 4px;
  background: #fff;

  ${(props) =>
    props.$on &&
    css`
      border-color: ${BLUE};
      background: #d9e8fb;
    `}

  ${(props) =>
    props.$faint &&
    css`
      margin: 0 4px;
      border-color: #c2c2c2;
    `}

  span {
    margin-top: 9px;
  }
`;

const StatusHint = styled.div`
  display: flex;
  align-items: center;
  gap: 5px;
  padding-left: 24px;
  line-height: 48px;
`;

const Dialog = styled.section`
  position: absolute;
  top: 313px;
  right: 146px;
  left: 562px;
  padding: 0 16px 16px;
  border-radius: 13px;
  background: #fff;
  box-shadow: 0 0 2px rgba(0, 0, 0, 0.7), 0 12px 70px rgba(0, 0, 0, 0.4);
`;

const DialogHeader = styled.header`
  display: flex;
  align-items: center;
  justify-content: space-between;
  height: 58px;
  padding-bottom: 3px;

  h2 {
    font-size: 21px;
  }
`;

const DialogClose = styled.button`
  display: flex;
  padding: 0 1px;
`;

const DialogBody = styled.div`
  display: flex;
  gap: 6px;
  height: 677px;
  border: 1px solid #c8c8c8;
`;

const NodeTable = styled.table`
  flex: 1;
  align-self: flex-start;
  min-width: 0;
  border-collapse: collapse;
  table-layout: fixed;
  white-space: nowrap;

  .index {
    width: 33px;
  }

  .node {
    width: 302px;
  }

  th,
  td {
    height: 31px;
    padding: 0;
    border: 1px solid #cfcfcf;
    border-top: 0;
    border-left: 0;
    font-weight: 400;
  }

  tr:nth-child(even) td {
    height: 32px;
  }

  th {
    background: #eee;
  }

  th.current {
    background: #80baf9;
    color: #fff;
    font-weight: 700;
  }

  .name {
    padding-left: 4px;
    background: #fffde6;
  }

  .value {
    padding-left: 5px;
  }

  .editing th {
    background: #80baf9;
    color: #fff;
    font-weight: 700;
  }

  .editing .value {
    padding: 0;
  }

  .changed .value {
    color: #1a8cff;
  }

  .disabled td {
    color: #a3a3a3;
  }
`;

const NodeEditor = styled.div`
  display: flex;
  align-items: center;
  height: 31px;
  padding: 0 4px 0 6px;
  border: 2px solid #66a9ee;

  input {
    flex: 1;
    min-width: 0;
    outline: 0;
  }

  input::selection {
    background: #3399ff;
    color: #fff;
  }
`;

const Preview = styled.section`
  display: flex;
  flex: none;
  flex-direction: column;
  width: 600px;
  margin-top: 76px;
  padding: 6px 11px 0 10px;
  border: 1px solid #c8c8c8;
  border-bottom: 0;

  h3 {
    color: #111;
  }

  p {
    padding-top: 9px;
    color: #444;
  }
`;

const Quote = styled.span`
  font-family: 'Noto Sans CJK SC', sans-serif;
`;

const Diagram = styled.svg`
  display: block;
  width: 100%;
  background: #000;
`;

const DialogFooter = styled.footer`
  display: flex;
  justify-content: flex-end;
  gap: 9px;
  padding-top: 9px;
`;

const DialogButton = styled.button`
  width: 120px;
  height: 39px;
  border: 1px solid ${(props) => (props.$primary ? '#2a7fe2' : '#cfcfcf')};
  border-radius: 5px;
  background: ${(props) => (props.$primary ? '#2a7fe2' : '#fff')};
  color: ${(props) => (props.$primary ? '#fff' : '#333')};
`;

const ResizeGrip = styled.svg`
  position: absolute;
  right: 4px;
  bottom: 4px;
  width: 12px;
  height: 12px;
`;

const Annotations = styled.svg`
  position: absolute;
  top: 0;
  left: 0;
  width: 100%;
  height: 100%;
  pointer-events: none;
`;

export default App;
